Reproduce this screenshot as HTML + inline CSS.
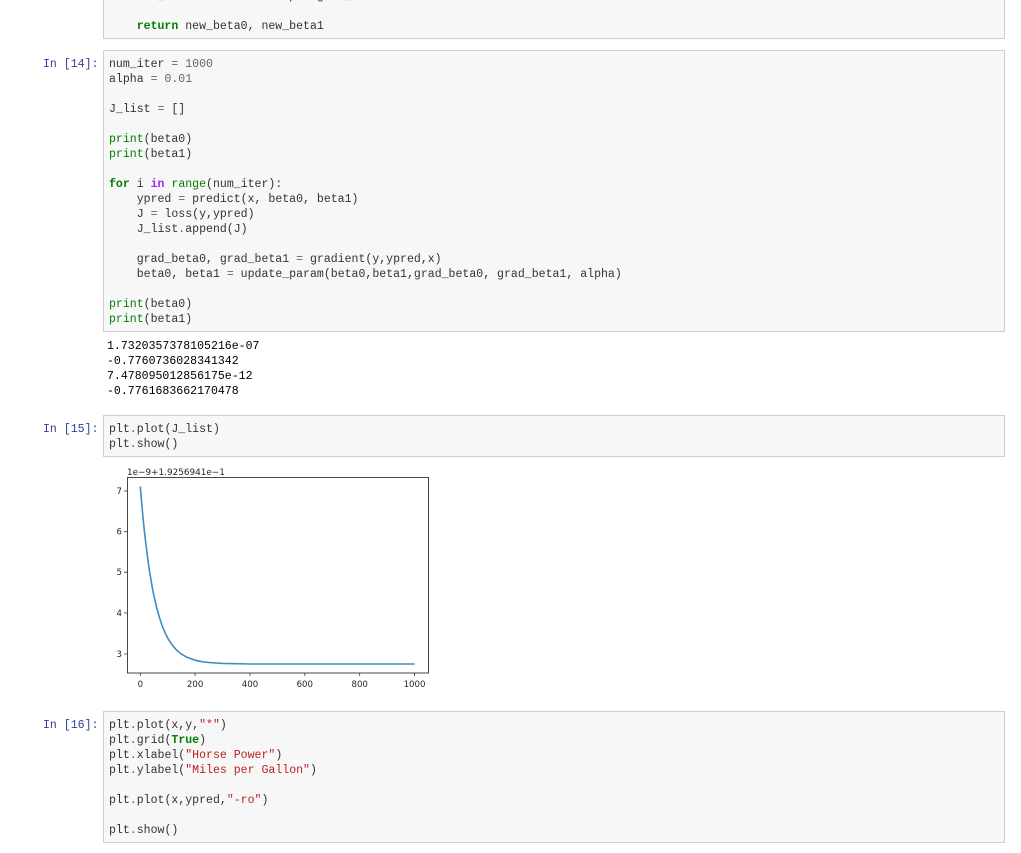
<!DOCTYPE html>
<html><head><meta charset="utf-8"><style>
html,body{margin:0;padding:0;background:#fff;width:1021px;height:853px;overflow:hidden}
body{position:relative;font-family:"Liberation Mono",monospace;font-size:11.55px;color:#333}
.c{position:absolute;left:103px;width:900px;background:#f7f7f7;border:1px solid #cfcfcf;box-sizing:content-box}
pre{position:absolute;margin:0;font:inherit;line-height:15px;white-space:pre}
.p{left:43px;color:#303f9f}
.code{left:109px}
.o{left:107px;color:#000}
.k{color:#008000;font-weight:bold}
.w{color:#a2f;font-weight:bold}
.b{color:#008000}
.n{color:#666}
.s{color:#ba2121}
svg{position:absolute;left:0;top:0}
svg text{font-family:"DejaVu Sans",sans-serif;font-size:8.6px;fill:#262626}
</style></head><body>

<div class="c" style="top:-6px;height:43px"></div>
<pre class="code" style="top:-11px">    new_beta1 = beta1 - alpha*grad_beta1

    <span class="k">return</span> new_beta0, new_beta1</pre>

<pre class="p" style="top:57px">In [14]:</pre>
<div class="c" style="top:50px;height:280px"></div>
<pre class="code" style="top:57px">num_iter <span class="n">=</span> <span class="n">1000</span>
alpha <span class="n">=</span> <span class="n">0.01</span>

J_list <span class="n">=</span> []

<span class="b">print</span>(beta0)
<span class="b">print</span>(beta1)

<span class="k">for</span> i <span class="w">in</span> <span class="b">range</span>(num_iter):
    ypred <span class="n">=</span> predict(x, beta0, beta1)
    J <span class="n">=</span> loss(y,ypred)
    J_list<span class="n">.</span>append(J)

    grad_beta0, grad_beta1 <span class="n">=</span> gradient(y,ypred,x)
    beta0, beta1 <span class="n">=</span> update_param(beta0,beta1,grad_beta0, grad_beta1, alpha)

<span class="b">print</span>(beta0)
<span class="b">print</span>(beta1)</pre>

<pre class="o" style="top:339px">1.7320357378105216e-07
-0.7760736028341342
7.478095012856175e-12
-0.7761683662170478</pre>

<pre class="p" style="top:422px">In [15]:</pre>
<div class="c" style="top:415px;height:40px"></div>
<pre class="code" style="top:422px">plt<span class="n">.</span>plot(J_list)
plt<span class="n">.</span>show()</pre>

<svg width="1021" height="853" viewBox="0 0 1021 853">
<g style="filter:blur(0.35px)">
<rect x="127.5" y="477.5" width="301" height="195.5" fill="#fff" stroke="#333" stroke-width="0.9"/>
<g stroke="#333" stroke-width="0.8">
<path d="M140.3 673v3M195.1 673v3M250 673v3M304.8 673v3M359.7 673v3M414.5 673v3"/>
<path d="M124 491h3.5M124 531.7h3.5M124 572.2h3.5M124 613h3.5M124 654h3.5"/>
</g>
<polyline fill="none" stroke="#1f77b4" stroke-width="1.6" stroke-opacity="0.85" stroke-linejoin="round" points="140.3,486.6 141.7,503.1 143,517.6 144.4,531.1 145.8,543.2 147.2,554.3 148.5,564.3 149.9,573.5 151.3,581.8 152.6,589.3 154,596.2 156.8,608.1 159.5,617.8 162.2,625.9 165,632.6 167.7,638.1 170.5,642.6 173.2,646.3 177.3,650.8 181.4,654.1 186.9,657.3 195.1,660.2 202,661.7 208.9,662.5 222.6,663.45 250,664 414.5,664"/>
<text x="127" y="475" style="font-size:8.85px">1e−9+1.9256941e−1</text>
<g text-anchor="end">
<text x="122" y="494">7</text>
<text x="122" y="534.7">6</text>
<text x="122" y="575.2">5</text>
<text x="122" y="616">4</text>
<text x="122" y="657">3</text>
</g>
<g text-anchor="middle">
<text x="140.3" y="687">0</text>
<text x="195.1" y="687">200</text>
<text x="250" y="687">400</text>
<text x="304.8" y="687">600</text>
<text x="359.7" y="687">800</text>
<text x="414.5" y="687">1000</text>
</g>
</g>
</svg>

<pre class="p" style="top:718px">In [16]:</pre>
<div class="c" style="top:711px;height:130px"></div>
<pre class="code" style="top:718px">plt<span class="n">.</span>plot(x,y,<span class="s">"*"</span>)
plt<span class="n">.</span>grid(<span class="k">True</span>)
plt<span class="n">.</span>xlabel(<span class="s">"Horse Power"</span>)
plt<span class="n">.</span>ylabel(<span class="s">"Miles per Gallon"</span>)

plt<span class="n">.</span>plot(x,ypred,<span class="s">"-ro"</span>)

plt<span class="n">.</span>show()</pre>

</body></html>
